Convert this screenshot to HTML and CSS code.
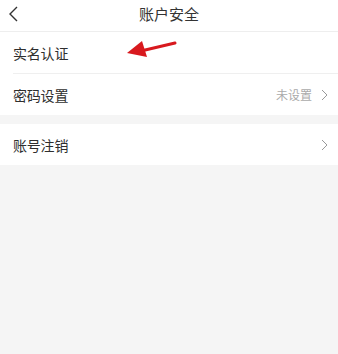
FILE: index.html
```html
<!DOCTYPE html>
<html lang="zh">
<head>
<meta charset="utf-8">
<link rel="stylesheet" href="styles.css">
</head>
<body>
<div class="page">
  <header class="nav">
    <svg class="back" width="12" height="18" viewBox="0 0 12 18"><polyline points="9,2 2,9 9,16" fill="none" stroke="#333" stroke-width="1.4"/></svg>
    <div class="title">账户安全</div>
  </header>
  <section class="group">
    <div class="row">
      <span class="label">实名认证</span>
      <svg class="arrow" width="60" height="24" viewBox="0 0 60 24"><line x1="52" y1="5" x2="20" y2="12.5" stroke="#d8191e" stroke-width="3" stroke-linecap="round"/><polygon points="4,15 19,3 24,19" fill="#d8191e"/></svg>
    </div>
    <div class="divider"></div>
    <div class="row">
      <span class="label">密码设置</span>
      <span class="right"><span class="value">未设置</span><svg class="chev" width="8" height="12" viewBox="0 0 8 12"><polyline points="2,1 7,6 2,11" fill="none" stroke="#999" stroke-width="1"/></svg></span>
    </div>
  </section>
  <section class="group">
    <div class="row">
      <span class="label">账号注销</span>
      <span class="right"><svg class="chev" width="8" height="12" viewBox="0 0 8 12"><polyline points="2,1 7,6 2,11" fill="none" stroke="#999" stroke-width="1"/></svg></span>
    </div>
  </section>
</div>
</body>
</html>
```
FILE: styles.css
```css
* { box-sizing: border-box; }
html, body { margin: 0; padding: 0; }
body {
  background: #f5f5f5;
  font-family: "Noto Sans CJK SC", "Noto Sans", sans-serif;
  color: #333;
  width: 338px;
  height: 354px;
  overflow: hidden;
}
.nav {
  height: 32px;
  background: #fff;
  border-bottom: 1px solid #eeeeee;
  position: relative;
  display: flex;
  align-items: center;
  justify-content: center;
}
.back { position: absolute; left: 8px; top: 5px; }
.title { font-size: 15px; color: #333; line-height: 1; margin-top: -4px; }
.group { background: #fff; margin-bottom: 9px; }
.row {
  height: 41px;
  display: flex;
  align-items: center;
  padding: 0 10px 0 13px;
  position: relative;
}
.label { font-size: 14px; color: #2e2e2e; letter-spacing: -0.2px; }
.divider { height: 1px; background: #efefef; margin-left: 13px; }
.right { margin-left: auto; display: flex; align-items: center; }
.value { font-size: 12px; color: #aaa; margin-right: 8px; }
.chev { display: block; }
.arrow { position: absolute; left: 123px; top: 6px; }
```
